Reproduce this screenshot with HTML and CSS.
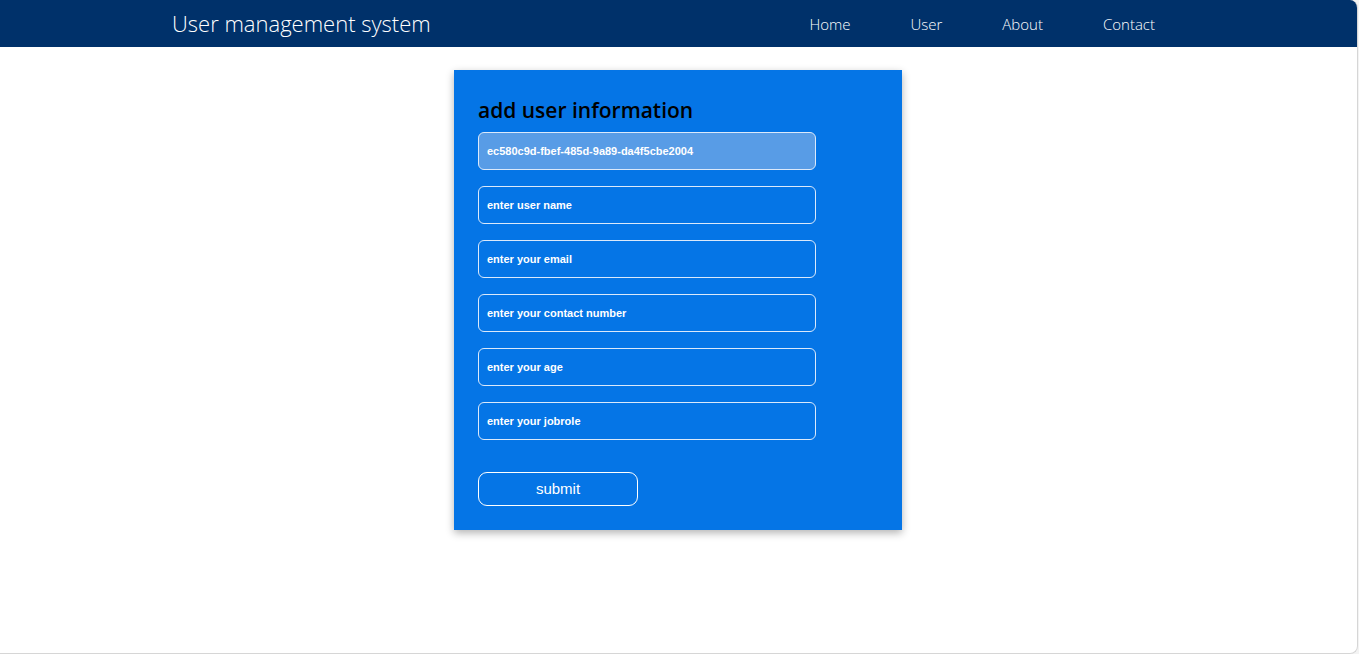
FILE: index.html
```html
<!DOCTYPE html>
<html>
<head>
<meta charset="utf-8">
<link rel="stylesheet" href="styles.css">
</head>
<body>
<div class="window">
  <header class="navbar">
    <div class="brand">User management system</div>
    <nav class="nav">
      <a class="nav-link">Home</a>
      <a class="nav-link">User</a>
      <a class="nav-link">About</a>
      <a class="nav-link">Contact</a>
    </nav>
  </header>
  <main class="main">
    <form class="card">
      <h2 class="card-title">add user information</h2>
      <div class="fields">
        <input class="field field-id" type="text" value="ec580c9d-fbef-485d-9a89-da4f5cbe2004" readonly>
        <input class="field" type="text" placeholder="enter user name">
        <input class="field" type="text" placeholder="enter your email">
        <input class="field" type="text" placeholder="enter your contact number">
        <input class="field" type="text" placeholder="enter your age">
        <input class="field" type="text" placeholder="enter your jobrole">
      </div>
      <button class="submit" type="button">submit</button>
    </form>
  </main>
</div>
</body>
</html>
```

FILE: styles.css
```css
* { box-sizing: border-box; }
html, body { margin: 0; padding: 0; background: #f3f3f3; }
.window {
  width: 1358px;
  height: 654px;
  background: #ffffff;
  border-right: 1px solid #d6d6d6;
  border-bottom: 1px solid #d6d6d6;
  border-radius: 0 8px 8px 0;
  overflow: hidden;
  display: flex;
  flex-direction: column;
}
.navbar {
  height: 47px;
  flex: none;
  background: #00316a;
  display: flex;
  align-items: center;
  justify-content: space-between;
  padding: 0 172px;
  color: #ffffff;
  font-family: "Open Sans", "Noto Sans", sans-serif;
}
.brand {
  font-size: 22px;
  font-weight: 300;
  margin-top: -1px;
}
.nav { display: flex; }
.nav-link {
  padding: 0 30px;
  font-size: 15px;
  font-weight: 300;
  color: #ffffff;
}
.main {
  flex: 1;
  display: flex;
  justify-content: center;
  padding-top: 23px;
  padding-right: 1px;
}
.card {
  width: 448px;
  height: 460px;
  background: #0575e6;
  box-shadow: 0 3px 8px rgba(0, 0, 0, 0.3);
  padding: 26px 24px 24px;
  display: flex;
  flex-direction: column;
  margin: 0;
}
.card-title {
  margin: 0 0 7px;
  font-family: "Open Sans", "Noto Sans", sans-serif;
  font-size: 21px;
  font-weight: 600;
  line-height: 29px;
  color: #000000;
}
.fields {
  display: flex;
  flex-direction: column;
  gap: 16px;
}
.field {
  width: 338px;
  height: 38px;
  border: 1px solid #dbe9fb;
  border-radius: 6px;
  background: transparent;
  padding: 0 8px;
  font-family: "Liberation Sans", Arial, sans-serif;
  font-size: 11px;
  font-weight: bold;
  color: #ffffff;
  outline: none;
}
.field::placeholder { color: #ffffff; opacity: 1; }
.field-id { background: #589ce6; }
.submit {
  margin-top: 32px;
  width: 160px;
  height: 34px;
  border: 1px solid #ffffff;
  border-radius: 9px;
  background: transparent;
  color: #ffffff;
  font-family: "Liberation Sans", Arial, sans-serif;
  font-size: 15px;
  line-height: 30px;
  padding: 0 0 1px;
}
```
